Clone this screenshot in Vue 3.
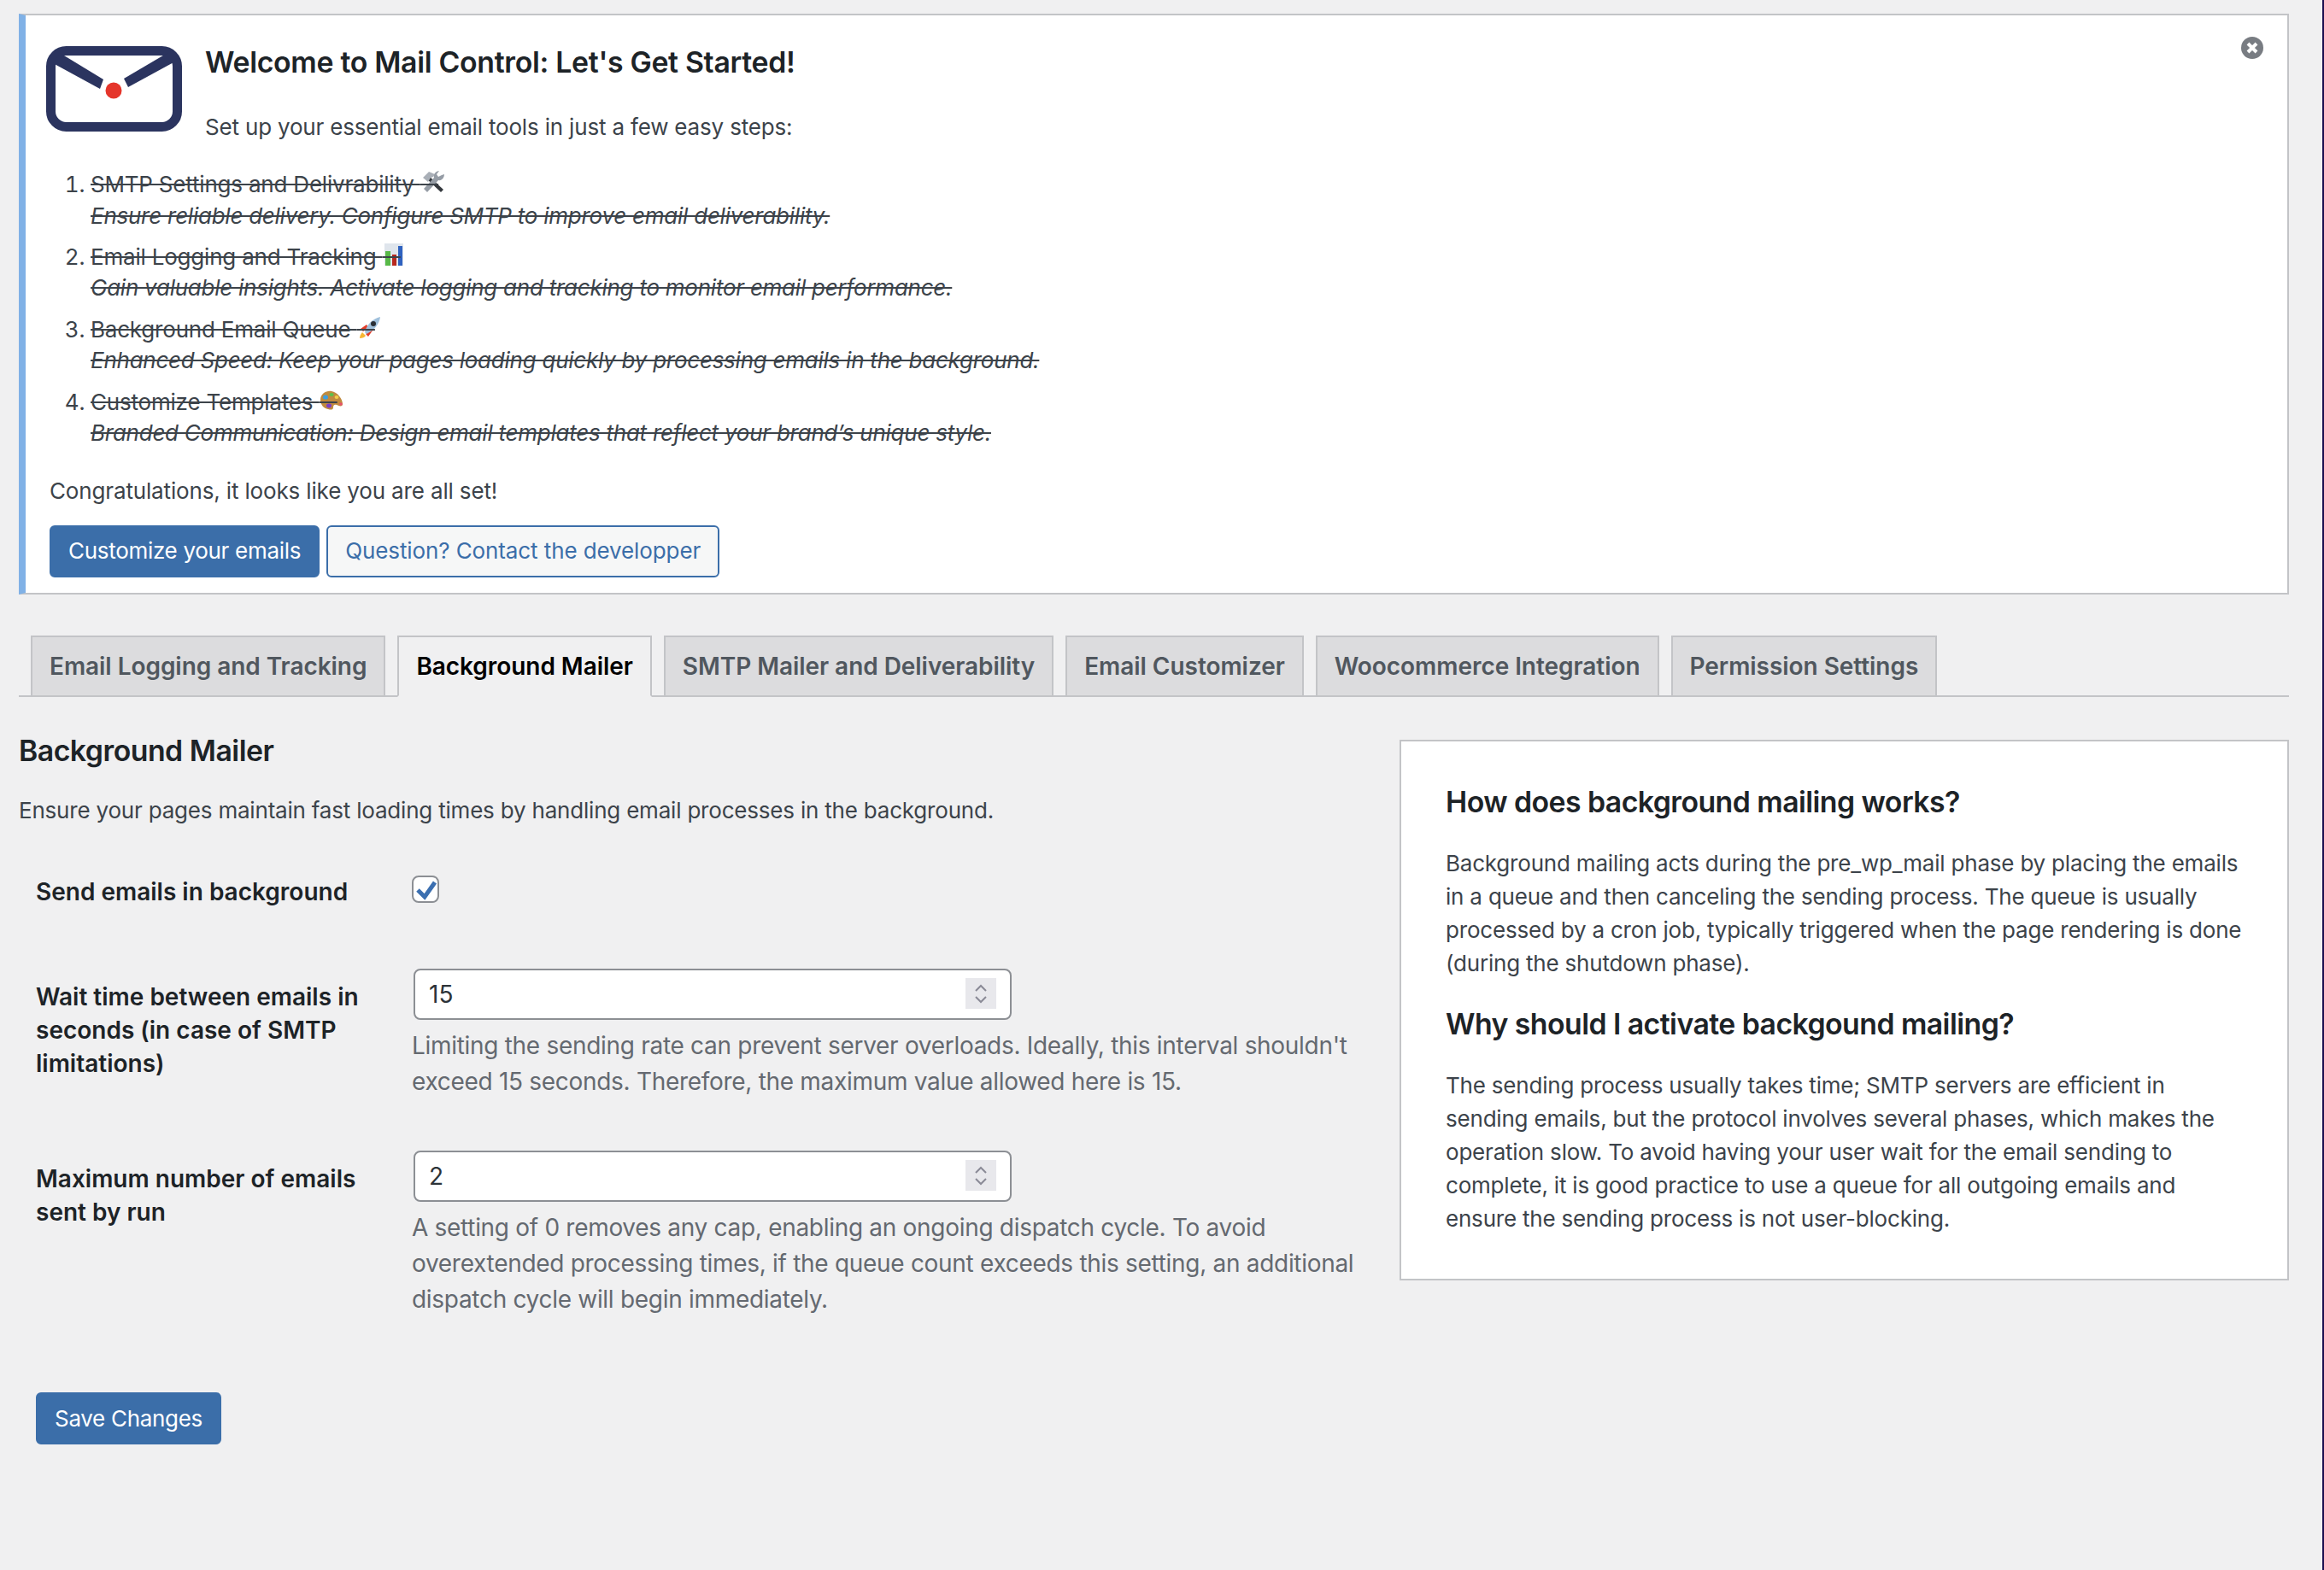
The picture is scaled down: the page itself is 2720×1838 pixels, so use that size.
<script setup>
const steps = [
  { title: 'SMTP Settings and Delivrability', icon: 'tools', text: 'Ensure reliable delivery. Configure SMTP to improve email deliverability.' },
  { title: 'Email Logging and Tracking', icon: 'chart', text: 'Gain valuable insights. Activate logging and tracking to monitor email performance.' },
  { title: 'Background Email Queue', icon: 'rocket', text: 'Enhanced Speed: Keep your pages loading quickly by processing emails in the background.' },
  { title: 'Customize Templates', icon: 'palette', text: 'Branded Communication: Design email templates that reflect your brand’s unique style.' }
]

const tabs = [
  'Email Logging and Tracking',
  'Background Mailer',
  'SMTP Mailer and Deliverability',
  'Email Customizer',
  'Woocommerce Integration',
  'Permission Settings'
]
</script>

<template>
  <div class="page">
    <main class="wrap">
      <section class="notice">
        <button class="dismiss" aria-label="Dismiss">
          <svg viewBox="0 0 26 26" width="26" height="26">
            <circle cx="13" cy="13" r="13" fill="#787c82" />
            <path d="M8 8l10 10M18 8L8 18" stroke="#fff" stroke-width="4" />
          </svg>
        </button>
        <div class="notice-head">
          <svg class="logo" viewBox="0 0 160 100" width="160" height="100">
            <rect x="5.5" y="5.5" width="148" height="89" rx="18" fill="none" stroke="#2b345f" stroke-width="11" />
            <path d="M16 8L67 39L63 50L8 20z" fill="#2b345f" />
            <path d="M142 8L91 38L96 48L151 18z" fill="#2b345f" />
            <circle cx="79" cy="52" r="9.5" fill="#e5352b" />
          </svg>
          <div class="notice-title">
            <h1>Welcome to Mail Control: Let's Get Started!</h1>
            <p class="intro">Set up your essential email tools in just a few easy steps:</p>
          </div>
        </div>
        <ol class="steps">
          <li v-for="step in steps" :key="step.icon">
            <s>{{ step.title }} <span class="emoji">&nbsp;<svg viewBox="0 0 26 26" width="26" height="26">
              <template v-if="step.icon === 'tools'">
                <path d="M8 6l17 16-3 3L5 9z" fill="#34383d" />
                <path d="M1 8l7-7 7 3-2 3-3 1-3 5z" fill="#a9afb7" />
                <path d="M20 0l-3 4 2 3 4-2 3-1c0 4-3 8-7 7L6 25l-4-4L14 8c-1-4 2-8 6-8z" fill="#959ca5" />
              </template>
              <template v-else-if="step.icon === 'chart'">
                <rect x="0" y="0" width="22" height="26" fill="#dfe5ec" />
                <rect x="1" y="9" width="6" height="17" fill="#58b947" />
                <rect x="9" y="13" width="5" height="13" fill="#b8281e" />
                <rect x="16" y="3" width="5" height="23" fill="#2f62c0" />
              </template>
              <template v-else-if="step.icon === 'rocket'">
                <path d="M4 19c-2 2-3 5-3 7 3 0 6-1 7-3z" fill="#f7b733" />
                <path d="M2 15l7-5 2 3-6 5zM11 24l5-7-3-2-5 6z" fill="#e23d28" />
                <path d="M7 19C9 10 16 3 25 1c-1 9-8 16-16 20z" fill="#9fc0dc" />
                <circle cx="17" cy="9" r="3" fill="#2a2f36" />
              </template>
              <template v-else>
                <path d="M0 13C0 6 7 2 13 3c7 1 13 9 13 15 0 3-3 3-7 1-3-1-4 1-4 3 0 3-3 3-6 2C4 23 0 19 0 13z" fill="#c08a3e" />
                <ellipse cx="6" cy="10" rx="3" ry="2.6" fill="#3d9fe0" />
                <ellipse cx="13" cy="7" rx="2.6" ry="2" fill="#5cc04b" />
                <ellipse cx="19" cy="10" rx="2.4" ry="2" fill="#f2cd4a" />
                <ellipse cx="10" cy="20" rx="3" ry="2.4" fill="#7d3fc4" />
                <circle cx="24" cy="18" r="1.8" fill="#e8506a" />
              </template>
            </svg></span></s>
            <br />
            <em><s>{{ step.text }}</s></em>
          </li>
        </ol>
        <p class="congrats">Congratulations, it looks like you are all set!</p>
        <div class="notice-actions">
          <a class="btn primary">Customize your emails</a>
          <a class="btn outline">Question? Contact the developper</a>
        </div>
      </section>

      <nav class="tabs">
        <a v-for="tab in tabs" :key="tab" class="tab" :class="{ active: tab === 'Background Mailer' }">{{ tab }}</a>
      </nav>

      <div class="content">
        <form class="settings" @submit.prevent>
          <h2>Background Mailer</h2>
          <p class="lead">Ensure your pages maintain fast loading times by handling email processes in the background.</p>

          <div class="row row-check">
            <label>Send emails in background</label>
            <div>
              <span class="checkbox">
                <svg viewBox="0 0 28 28" width="28" height="28">
                  <path d="M5 15l8 8L25 6" fill="none" stroke="#3b6fb0" stroke-width="5" />
                </svg>
              </span>
            </div>
          </div>

          <div class="row row-wait">
            <label>Wait time between emails in seconds (in case of SMTP limitations)</label>
            <div>
              <div class="number">
                <input type="text" value="15" />
                <span class="spin">
                  <svg viewBox="0 0 36 36" width="36" height="36">
                    <path d="M12 15l6-6 6 6M12 22l6 6 6-6" fill="none" stroke="#8a8a96" stroke-width="2" />
                  </svg>
                </span>
              </div>
              <p class="desc">Limiting the sending rate can prevent server overloads. Ideally, this interval shouldn't exceed 15 seconds. Therefore, the maximum value allowed here is 15.</p>
            </div>
          </div>

          <div class="row row-max">
            <label>Maximum number of emails sent by run</label>
            <div>
              <div class="number">
                <input type="text" value="2" />
                <span class="spin">
                  <svg viewBox="0 0 36 36" width="36" height="36">
                    <path d="M12 15l6-6 6 6M12 22l6 6 6-6" fill="none" stroke="#8a8a96" stroke-width="2" />
                  </svg>
                </span>
              </div>
              <p class="desc">A setting of 0 removes any cap, enabling an ongoing dispatch cycle. To avoid overextended processing times, if the queue count exceeds this setting, an additional dispatch cycle will begin immediately.</p>
            </div>
          </div>

          <button class="btn primary save">Save Changes</button>
        </form>

        <aside class="card">
          <h3>How does background mailing works?</h3>
          <p>Background mailing acts during the pre_wp_mail phase by placing the emails in a queue and then canceling the sending process. The queue is usually processed by a cron job, typically triggered when the page rendering is done (during the shutdown phase).</p>
          <h3>Why should I activate backgound mailing?</h3>
          <p>The sending process usually takes time; SMTP servers are efficient in sending emails, but the protocol involves several phases, which makes the operation slow. To avoid having your user wait for the email sending to complete, it is good practice to use a queue for all outgoing emails and ensure the sending process is not user-blocking.</p>
        </aside>
      </div>
    </main>
    <div class="edge"></div>
  </div>
</template>

<style scoped>
.page {
  display: flex;
  min-height: 1838px;
  background: #f0f0f1;
  color: #3c434a;
  font-family: Inter, "Liberation Sans", sans-serif;
  font-size: 26px;
  line-height: 1.4;
}
.wrap {
  flex: 1;
  min-width: 0;
  padding: 16px 39px 0 22px;
}
.edge {
  width: 2px;
  background: #1c0f4f;
}

/* notice */
.notice {
  position: relative;
  isolation: isolate;
  height: 680px;
  box-sizing: border-box;
  background: #fff;
  border: 2px solid #c3c4c7;
  border-left: 8px solid #80b1e6;
  padding: 36px 24px 0 28px;
}
.dismiss {
  position: absolute;
  top: 25px;
  right: 28px;
  width: 26px;
  height: 26px;
  padding: 0;
  border: none;
  background: none;
}
.dismiss svg {
  display: block;
}
.notice-head {
  display: flex;
  gap: 26px;
  margin-left: -4px;
}
.logo {
  flex: none;
}
.notice-title {
  margin-top: -3px;
}
h1 {
  margin: 0;
  font-size: 33.8px;
  font-weight: 600;
  line-height: 1.3;
  color: #1d2327;
  letter-spacing: -0.3px;
}
.intro {
  margin: 36px 0 0;
  letter-spacing: -0.18px;
}
.steps {
  margin: 31px 0 0;
  padding: 0 0 0 48px;
  letter-spacing: -0.2px;
}
.steps li {
  margin-bottom: 12px;
}
.steps em {
  letter-spacing: -0.25px;
}
.emoji {
  position: relative;
  display: inline;
  letter-spacing: 14px;
}
.emoji svg {
  position: absolute;
  left: 2px;
  top: 0;
  z-index: -1;
}
.congrats {
  margin: 32px 0 0;
  letter-spacing: -0.15px;
}
.notice-actions {
  display: flex;
  gap: 8px;
  margin-top: 21px;
}

/* buttons */
.btn {
  display: inline-flex;
  align-items: center;
  box-sizing: border-box;
  height: 61px;
  padding: 0 20px;
  border-radius: 6px;
  font-family: inherit;
  font-size: 26px;
  letter-spacing: -0.1px;
}
.primary {
  background: #3b6ea9;
  border: 2px solid #3b6ea9;
  color: #fff;
  letter-spacing: -0.3px;
}
.outline {
  background: #f6f7f7;
  border: 2px solid #3b6ea9;
  color: #3b6ea9;
}

/* tabs */
.tabs {
  display: flex;
  margin-top: 48px;
  border-bottom: 2px solid #c3c4c7;
}
.tab {
  box-sizing: border-box;
  margin-left: 14px;
  margin-bottom: -2px;
  padding: 10px 20px;
  background: #dcdcde;
  border: 2px solid #c3c4c7;
  color: #50575e;
  font-size: 28px;
  font-weight: 600;
  line-height: 48px;
  letter-spacing: -0.05px;
}
.tab.active {
  background: #f0f0f1;
  border-bottom-color: #f0f0f1;
  color: #000;
}

/* content */
.content {
  display: flex;
  align-items: flex-start;
  gap: 38px;
}
.settings {
  flex: 1;
  min-width: 0;
}
h2 {
  margin: 41px 0 0;
  font-size: 33.8px;
  font-weight: 600;
  line-height: 1.3;
  color: #1d2327;
  letter-spacing: -0.5px;
}
.lead {
  margin: 30px 0 0;
  letter-spacing: -0.2px;
}
.row {
  display: grid;
  grid-template-columns: 440px 1fr;
  padding-left: 20px;
}
.row label {
  font-size: 28px;
  font-weight: 600;
  color: #1d2327;
  padding-right: 20px;
}
.row-check {
  margin-top: 58px;
}
.row-wait {
  margin-top: 69px;
}
.row-max {
  margin-top: 60px;
}
.row-wait label,
.row-max label {
  padding-top: 14px;
}
.checkbox {
  display: flex;
  align-items: center;
  justify-content: center;
  box-sizing: border-box;
  width: 32px;
  height: 32px;
  background: #fff;
  border: 2px solid #8c8f94;
  border-radius: 8px;
}
.number {
  position: relative;
  width: 700px;
  margin-left: 2px;
}
.number input {
  display: block;
  box-sizing: border-box;
  width: 100%;
  height: 60px;
  padding: 0 16px;
  background: #fff;
  border: 2px solid #8c8f94;
  border-radius: 8px;
  color: #2c3338;
  font-family: inherit;
  font-size: 28px;
  outline: none;
}
.spin {
  position: absolute;
  top: 11px;
  right: 18px;
  width: 36px;
  height: 36px;
  background: #e8e8ec;
}
.spin svg {
  display: block;
}
.desc {
  margin: 9px 0 0;
  color: #646970;
  font-size: 28px;
  line-height: 42px;
  letter-spacing: -0.3px;
}
.save {
  margin: 88px 0 0 20px;
}

/* side card */
.card {
  flex: none;
  box-sizing: border-box;
  width: 1041px;
  height: 633px;
  margin-top: 50px;
  padding: 49px 52px 0;
  background: #fff;
  border: 2px solid #c3c4c7;
}
.card h3 {
  margin: 0;
  font-size: 33.8px;
  font-weight: 600;
  line-height: 1.3;
  color: #1d2327;
  letter-spacing: -0.55px;
}
.card p {
  margin: 30px 0 30px;
  line-height: 39px;
  letter-spacing: -0.2px;
}
</style>

<style>
body {
  background: #f0f0f1;
}
</style>
